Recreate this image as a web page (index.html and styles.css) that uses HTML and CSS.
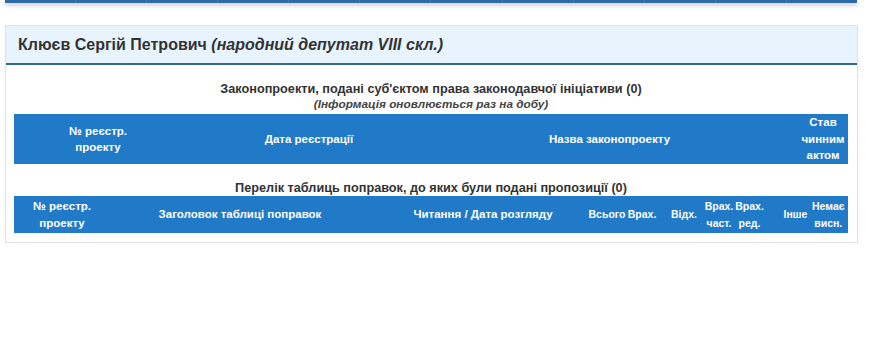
FILE: index.html
```html
<!DOCTYPE html>
<html lang="uk">
<head>
<meta charset="utf-8">
<title>Клюєв Сергій Петрович</title>
<link rel="stylesheet" href="styles.css">
</head>
<body>
<div class="topbar">
  <span class="seg"></span><span class="seg"></span><span class="seg"></span><span class="seg"></span><span class="seg"></span><span class="seg"></span><span class="seg"></span><span class="seg"></span><span class="seg"></span><span class="seg"></span><span class="seg"></span><span class="seg"></span>
</div>
<div class="panel">
  <div class="panel-head">Клюєв Сергій Петрович <i>(народний депутат VIII скл.)</i></div>
  <div class="panel-body">
    <div class="sec-title">Законопроекти, подані суб'єктом права законодавчої ініціативи (0)</div>
    <div class="sec-note">(Інформація оновлюється раз на добу)</div>
    <div class="thead t1">
      <div class="c">№ реєстр.<br>проекту</div>
      <div class="c">Дата реєстрації</div>
      <div class="c c3">Назва законопроекту</div>
      <div class="c">Став<br>чинним<br>актом</div>
    </div>
    <div class="sec-title st2">Перелік таблиць поправок, до яких були подані пропозиції (0)</div>
    <div class="thead t2">
      <div class="c">№ реєстр.<br>проекту</div>
      <div class="c">Заголовок таблиці поправок</div>
      <div class="c k3">Читання / Дата розгляду</div>
      <div class="c sm">Всього</div>
      <div class="c sm">Врах.</div>
      <div class="c sm k6">Відх.</div>
      <div class="c sm">Врах.<br>част.</div>
      <div class="c sm">Врах.<br>ред.</div>
      <div class="c sm k9">Інше</div>
      <div class="c sm k10">Немає<br>висн.</div>
    </div>
  </div>
</div>
</body>
</html>
```
FILE: styles.css
```css
html, body {
  margin: 0;
  padding: 0;
  background: #ffffff;
  font-family: "Liberation Sans", Arial, sans-serif;
  color: #333333;
}

.topbar {
  display: flex;
  margin: 0 12px 0 5px;
  height: 3px;
  background: #2d6aa8;
  box-shadow: 0 2px 4px rgba(0, 0, 0, 0.28);
}

.seg {
  flex: 1 1 auto;
  border-right: 1px solid #3c76b2;
}
.seg:last-child { border-right: none; }

.panel {
  margin: 22px 11px 0 5px;
  border: 1px solid #dfe3e6;
  box-shadow: 0 1px 2px rgba(0, 0, 0, 0.05);
}

.panel-head {
  height: 37px;
  line-height: 37px;
  padding: 0 12px;
  background: #e8f4fd;
  border-bottom: 2px solid #2f6b86;
  font-size: 16px;
  font-weight: bold;
  color: #333333;
}
.panel-head i {
  font-weight: bold;
}

.panel-body {
  padding: 17px 9px 9px 8px;
}

.sec-title {
  text-align: center;
  font-size: 12.7px;
  font-weight: bold;
  line-height: 15px;
  color: #333333;
}
.st2 {
  margin-top: 17px;
}

.sec-note {
  text-align: center;
  font-size: 11.8px;
  font-style: italic;
  font-weight: bold;
  line-height: 15px;
  color: #444444;
  margin: 0 0 2px;
}

.thead {
  display: grid;
  background: #207ac7;
  color: #ffffff;
  font-size: 11.5px;
  font-weight: bold;
  line-height: 16.5px;
}
.thead .c {
  display: flex;
  flex-direction: column;
  justify-content: center;
  text-align: center;
  white-space: nowrap;
}

.t1 {
  grid-template-columns: 168px 254px 363px 48px;
  height: 50px;
}
.t1 .c3 { padding-right: 16px; }

.t2 {
  grid-template-columns: 96px 260px 218px 38px 32px 46px 30px 31px 47px 35px;
  height: 37px;
  overflow: hidden;
}
.t2 .sm { font-size: 10.5px; }
.t2 .k3 { padding-left: 8px; }
.t2 .k6 { padding-left: 10px; padding-right: 4px; }
.t2 .k9 { padding-left: 14px; }
.t2 .k10 { overflow: hidden; align-items: flex-start; }
```
